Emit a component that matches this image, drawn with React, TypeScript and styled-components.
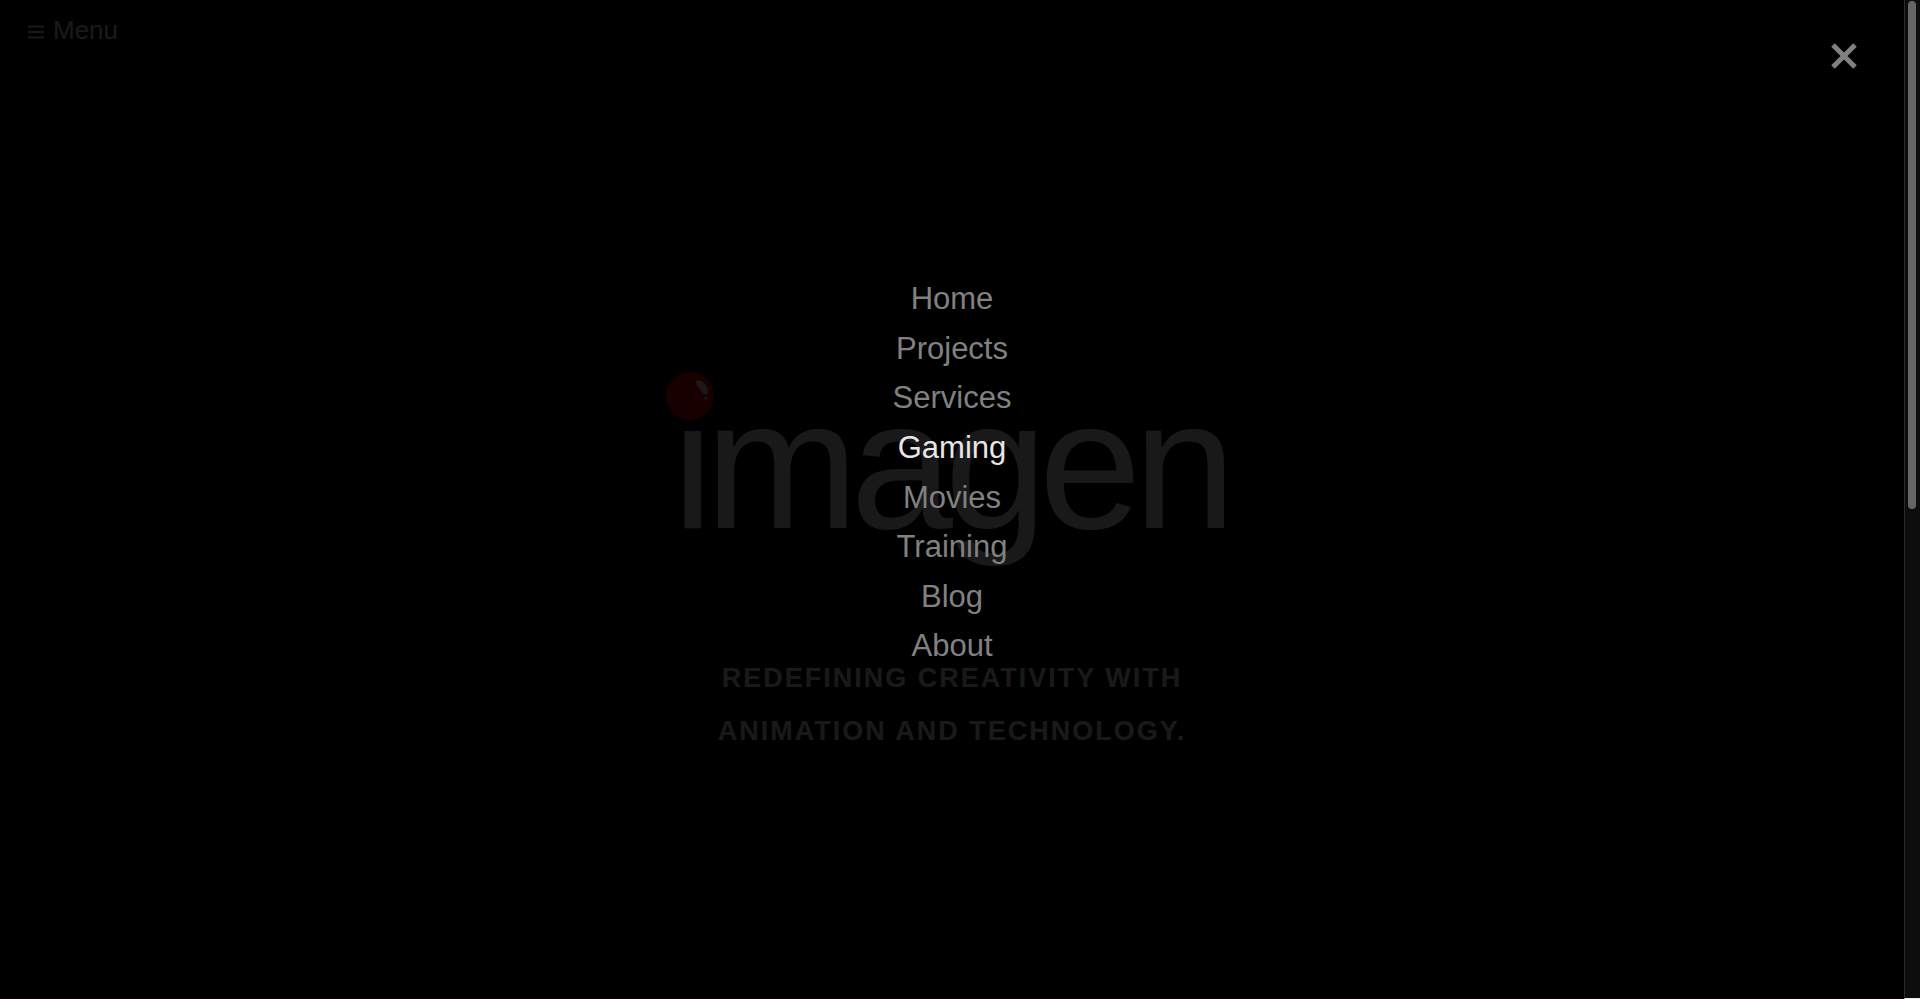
import React from "react";
import styled, { createGlobalStyle } from "styled-components";

const GlobalStyle = createGlobalStyle`
  * { box-sizing: border-box; }
  html, body { margin: 0; background: #000; overflow: hidden; }
  body { font-family: "Liberation Sans", Arial, Helvetica, sans-serif; color: #fff; }
`;

const Window = styled.div`
  display: grid;
  grid-template-columns: 1fr 16px;
  height: 100vh;
`;

const Page = styled.div`
  position: relative;
  overflow: hidden;
  border-bottom: 1px solid #120305;
  background: #000;
`;

const Header = styled.header`
  display: flex;
  height: 60px;
  padding: 0 27px;
`;

const MenuButton = styled.button`
  display: flex;
  align-items: center;
  gap: 8px;
  padding: 0;
  border: 0;
  background: none;
  color: #fff;
  font: 26px/30px "Liberation Sans", Arial, sans-serif;
`;

const MenuIcon = styled.svg`
  width: 18px;
  height: 14px;
  margin-top: 4px;
`;

const Hero = styled.main`
  display: flex;
  flex-direction: column;
  align-items: center;
  padding-top: 294px;
`;

const Logo = styled.div`
  position: relative;
  height: 298px;
  padding-right: 4px;
  font-size: 184px;
  line-height: 220px;
  letter-spacing: -8px;
`;

const Ball = styled.svg`
  position: absolute;
  left: -7px;
  top: 17px;
  width: 50px;
  height: 50px;
`;

const Tagline = styled.h1`
  margin: 0;
  font-size: 27px;
  line-height: 53px;
  font-weight: 700;
  letter-spacing: 2px;
  text-align: center;
  text-transform: uppercase;
`;

const Overlay = styled.div`
  position: absolute;
  inset: 0;
  background: rgba(0, 0, 0, 0.9);
`;

const CloseButton = styled.button`
  position: absolute;
  top: 36px;
  right: 40px;
  display: grid;
  place-items: center;
  width: 40px;
  height: 40px;
  padding: 0;
  border: 0;
  background: none;
  color: #818181;
`;

const Nav = styled.nav`
  display: grid;
  grid-auto-rows: 1fr;
  justify-items: center;
  height: 397px;
  margin-top: 274px;
`;

const NavLink = styled.a<{ $active?: boolean }>`
  color: ${(p) => (p.$active ? "#e6e6e6" : "#818181")};
  font-size: 31px;
  line-height: 49px;
  text-decoration: none;
`;

const ScrollTrack = styled.div`
  padding: 1px 4px 0 3px;
  border-left: 1px solid #2c2c2c;
  border-bottom: 1px solid #f3e6e8;
  background: #0d0d0d;
`;

const ScrollThumb = styled.div`
  height: 51%;
  border-radius: 4px;
  background: #666;
`;

const links = ["Home", "Projects", "Services", "Gaming", "Movies", "Training", "Blog", "About"];

export default function App() {
  return (
    <Window>
      <GlobalStyle />
      <Page>
        <Header>
          <MenuButton type="button">
            <MenuIcon viewBox="0 0 18 14" aria-hidden="true">
              <path d="M1 1.5h16M1 7h16M1 12.5h16" stroke="currentColor" strokeWidth="2" />
            </MenuIcon>
            Menu
          </MenuButton>
        </Header>
        <Hero>
          <Logo>
            imagen
            <Ball viewBox="0 0 50 50" aria-hidden="true">
              <circle cx="25" cy="25" r="24" fill="#f00000" />
              <path d="M31 12c-1-3 4-4 7-1 3 3 5 7 5 10 0 4-4 3-6 0-2-4-5-5-6-9z" fill="#fff" />
              <circle cx="41" cy="27" r="1.5" fill="#fff" />
            </Ball>
          </Logo>
          <Tagline>
            Redefining creativity with
            <br />
            animation and technology.
          </Tagline>
        </Hero>
        <Overlay>
          <CloseButton type="button" aria-label="Close menu">
            <svg width="26" height="26" viewBox="0 0 26 26" aria-hidden="true">
              <path d="M2 2l22 22M24 2l-22 22" stroke="currentColor" strokeWidth="5" />
            </svg>
          </CloseButton>
          <Nav>
            {links.map((label) => (
              <NavLink key={label} href="#" $active={label === "Gaming"}>
                {label}
              </NavLink>
            ))}
          </Nav>
        </Overlay>
      </Page>
      <ScrollTrack>
        <ScrollThumb />
      </ScrollTrack>
    </Window>
  );
}
